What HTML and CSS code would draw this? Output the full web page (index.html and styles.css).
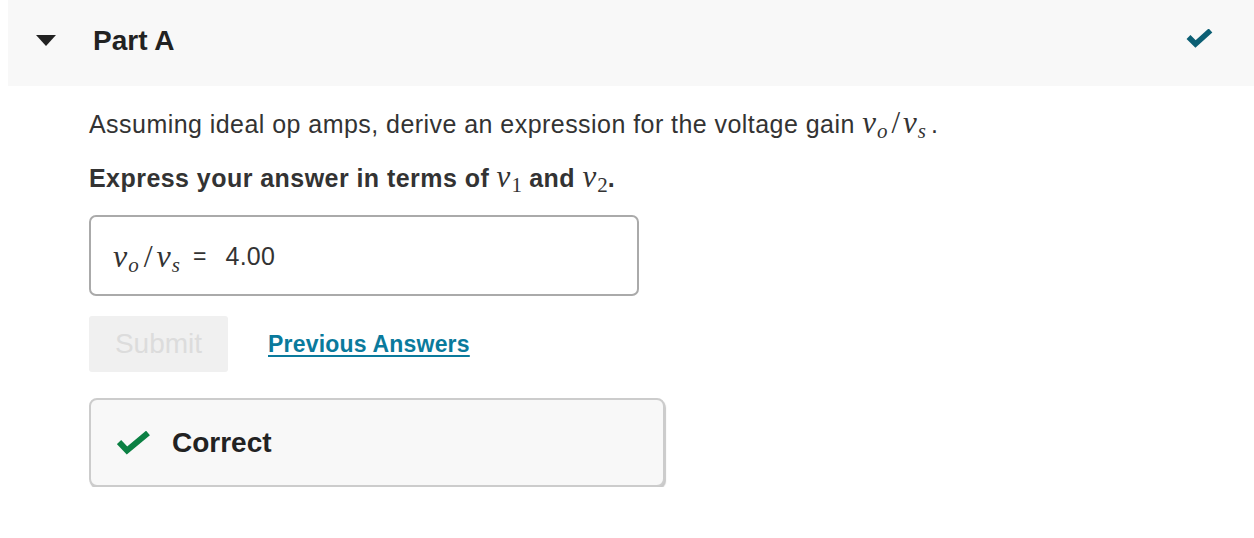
FILE: index.html
```html
<!DOCTYPE html>
<html lang="en">
<head>
<meta charset="utf-8">
<title>Part A</title>
<link rel="stylesheet" href="styles.css">
</head>
<body>
<section class="part">
  <header class="part-header">
    <svg class="caret" width="20" height="11" viewBox="0 0 20 11"><polygon points="0,0 20,0 10,11" fill="#222"/></svg>
    <h2 class="part-title">Part A</h2>
    <svg class="status-check" width="27" height="20" viewBox="0 0 27 20"><polyline points="2.5,8 9.5,15 24.5,1.5" fill="none" stroke="#0c5f74" stroke-width="5.5"/></svg>
  </header>
  <div class="part-body">
    <p class="prompt">Assuming ideal op amps, derive an expression for the voltage gain <span class="math"><i>v</i><sub><i>o</i></sub><span class="slash">/</span><i>v</i><sub><i>s</i></sub></span><span class="period">.</span></p>
    <p class="instr">Express your answer in terms of <span class="math"><i>v</i><sub>1</sub></span> and <span class="math"><i>v</i><sub>2</sub></span>.</p>
    <div class="answer-box">
      <span class="math big"><i>v</i><sub><i>o</i></sub><span class="slash">/</span><i>v</i><sub><i>s</i></sub></span>
      <span class="eq">=</span>
      <span class="value">4.00</span>
    </div>
    <div class="actions">
      <button class="submit" disabled>Submit</button>
      <a class="prev" href="#">Previous Answers</a>
    </div>
    <div class="feedback">
      <svg class="fb-check" width="34" height="24" viewBox="0 0 34 24"><polyline points="2,11 10,19.5 31,2" fill="none" stroke="#0b8043" stroke-width="6"/></svg>
      <span class="fb-text">Correct</span>
    </div>
  </div>
</section>
</body>
</html>
```
FILE: styles.css
```css
* { box-sizing: border-box; }
html, body { margin: 0; padding: 0; background: #fff; }
body {
  padding-left: 8px;
  font-family: "Liberation Sans", Arial, sans-serif;
  color: #333;
}
.part-header {
  height: 86px;
  background: #f8f8f8;
  display: flex;
  align-items: center;
  padding-left: 28px;
  padding-right: 41px;
}
.caret { margin-top: -5px; flex: none; }
.part-title {
  margin: -4px 0 0 37px;
  font-size: 28px;
  font-weight: bold;
  color: #222;
  line-height: 1;
  flex: 1;
}
.status-check { margin-top: -8px; }
.part-body {
  padding-left: 81px;
  padding-top: 22px;
}
.prompt, .instr {
  margin: 0;
  font-size: 25px;
  letter-spacing: 0.45px;
  line-height: 30px;
  color: #333;
}
.instr {
  margin-top: 23px;
  font-weight: bold;
}
.math {
  font-family: "Liberation Serif", "Times New Roman", serif;
  font-size: 31px;
  font-weight: normal;
  letter-spacing: 0;
  color: #333;
  white-space: nowrap;
}
.math i { font-style: italic; margin-right: 1px; }
.math sub {
  font-size: 21px;
  vertical-align: -5px;
  line-height: 0;
}
.math .slash { font-style: normal; margin: 0 3px; }
.period { margin-left: 4px; }
.answer-box {
  margin-top: 22px;
  width: 550px;
  height: 81px;
  border: 2px solid #aaa;
  border-radius: 7px;
  display: flex;
  align-items: center;
  padding-left: 22px;
  padding-top: 1px;
}
.answer-box .math { font-size: 32px; }
.answer-box .math .slash { margin: 0 4px; }
.eq {
  font-size: 23px;
  margin-left: 12px;
  color: #333;
}
.value {
  font-size: 25px;
  letter-spacing: 0.3px;
  margin-left: 19px;
  color: #333;
}
.actions {
  margin-top: 20px;
  display: flex;
  align-items: center;
}
.submit {
  width: 139px;
  height: 56px;
  border: none;
  border-radius: 3px;
  background: #f0f0f0;
  color: #dcdcdc;
  font-family: "Liberation Sans", Arial, sans-serif;
  font-size: 28px;
  padding: 0;
}
.prev {
  margin-left: 40px;
  font-size: 23px;
  letter-spacing: 0.2px;
  font-weight: bold;
  color: #0a7a9c;
  text-decoration: underline;
  text-decoration-thickness: 2px;
  text-underline-offset: 3px;
}
.feedback {
  margin-top: 26px;
  width: 576px;
  height: 89px;
  background: #f8f8f8;
  border: 2px solid #ccc;
  border-radius: 8px;
  box-shadow: 1px 2px 1px #c8c8c8;
  display: flex;
  align-items: center;
  padding-left: 26px;
}
.fb-check { margin-top: 1px; }
.fb-text {
  margin-left: 21px;
  font-size: 28px;
  font-weight: bold;
  color: #222;
}
```
